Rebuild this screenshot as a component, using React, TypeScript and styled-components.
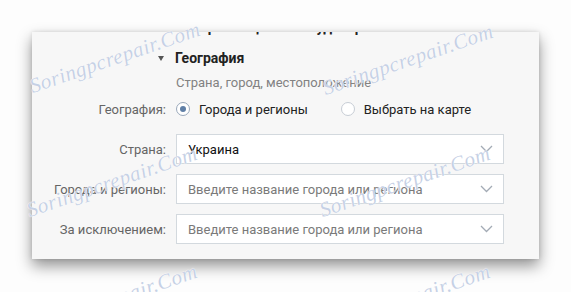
import React from "react"
import styled, { createGlobalStyle } from "styled-components"

const GlobalStyle = createGlobalStyle`
  body {
    margin: 0;
    background: #fdfdfd;
    font-family: Roboto, "Open Sans", sans-serif;
  }
`

const Page = styled.div`
  position: relative;
  width: 571px;
  height: 292px;
  padding: 32px 0 0 32px;
  box-sizing: border-box;
  overflow: hidden;
`

const Panel = styled.div`
  width: 507px;
  height: 227px;
  background: #f7f7f7;
  box-shadow: 0 7px 14px rgba(0, 0, 0, 0.42), 0 0 4px rgba(0, 0, 0, 0.12);
  overflow: hidden;
  display: flex;
  flex-direction: column;
`

const ClippedHeading = styled.div`
  margin-top: -13px;
  padding-left: 144px;
  height: 16px;
  line-height: 16px;
  font-size: 14px;
  font-weight: 700;
  color: #222;
`

const SectionHead = styled.div`
  display: flex;
  align-items: center;
  margin-top: 15px;
  padding-left: 126px;
  height: 16px;
`

const Toggle = styled.span`
  width: 0;
  height: 0;
  border-left: 3.5px solid transparent;
  border-right: 3.5px solid transparent;
  border-top: 5px solid #555;
  margin-right: 11px;
`

const Title = styled.div`
  font-size: 14px;
  font-weight: 700;
  color: #222;
  line-height: 16px;
`

const Subtitle = styled.div`
  margin-top: 9px;
  padding-left: 144px;
  font-size: 13px;
  line-height: 16px;
  color: #828282;
`

const Form = styled.div`
  display: grid;
  grid-template-columns: 134px 328px;
  grid-auto-rows: 30px;
  column-gap: 10px;
  row-gap: 10px;
  margin-top: 3px;
`

const Label = styled.div`
  text-align: right;
  align-self: center;
  font-size: 13px;
  color: #656565;
`

const RadioGroup = styled.div`
  display: flex;
  align-items: center;
  gap: 33px;
`

const RadioOption = styled.label`
  display: flex;
  align-items: center;
  gap: 9px;
  font-size: 13px;
  color: #222;
`

const RadioCircle = styled.span<{ $checked?: boolean }>`
  width: 14px;
  height: 14px;
  box-sizing: border-box;
  border-radius: 50%;
  background: #fff;
  border: 1px solid ${p => (p.$checked ? "#9aa9bb" : "#c7cdd5")};
  display: flex;
  align-items: center;
  justify-content: center;
  &::after {
    content: "";
    display: ${p => (p.$checked ? "block" : "none")};
    width: 6px;
    height: 6px;
    border-radius: 50%;
    background: #5f7fa6;
  }
`

const SelectBox = styled.div`
  display: flex;
  align-items: center;
  justify-content: space-between;
  box-sizing: border-box;
  height: 30px;
  background: #fff;
  border: 1px solid #d3d9de;
  padding: 0 10px 0 11px;
`

const SelectText = styled.span<{ $placeholder?: boolean }>`
  font-size: 13px;
  color: ${p => (p.$placeholder ? "#7a7a7a" : "#111")};
`

const Watermark = styled.div`
  position: absolute;
  font-family: "Liberation Serif", serif;
  font-style: italic;
  font-size: 21px;
  letter-spacing: 0.5px;
  color: rgba(160, 178, 212, 0.6);
  text-shadow: 0 0 1px #fff, 0 0 1px #fff;
  transform: translate(-50%, -50%) rotate(-19deg);
  white-space: nowrap;
  pointer-events: none;
`

const Chevron = () => (
  <svg width="13" height="8" viewBox="0 0 13 8">
    <path d="M1 1 L6.5 6.5 L12 1" fill="none" stroke="#a3abb5" strokeWidth="1.3" />
  </svg>
)

const marks = [
  [115, 58], [408, 60],
  [112, 182], [405, 182],
  [112, 300], [405, 300],
]

export default function App() {
  return (
    <>
      <GlobalStyle />
      <Page>
        <Panel>
          <ClippedHeading>Настройка целевой аудитории</ClippedHeading>
          <SectionHead>
            <Toggle />
            <Title>География</Title>
          </SectionHead>
          <Subtitle>Страна, город, местоположение</Subtitle>
          <Form>
            <Label>География:</Label>
            <RadioGroup>
              <RadioOption>
                <RadioCircle $checked />
                Города и регионы
              </RadioOption>
              <RadioOption>
                <RadioCircle />
                Выбрать на карте
              </RadioOption>
            </RadioGroup>

            <Label>Страна:</Label>
            <SelectBox>
              <SelectText>Украина</SelectText>
              <Chevron />
            </SelectBox>

            <Label>Города и регионы:</Label>
            <SelectBox>
              <SelectText $placeholder>Введите название города или региона</SelectText>
              <Chevron />
            </SelectBox>

            <Label>За исключением:</Label>
            <SelectBox>
              <SelectText $placeholder>Введите название города или региона</SelectText>
              <Chevron />
            </SelectBox>
          </Form>
        </Panel>
        {marks.map(([x, y], i) => (
          <Watermark key={i} style={{ left: x, top: y }}>Soringpcrepair.Com</Watermark>
        ))}
      </Page>
    </>
  )
}
